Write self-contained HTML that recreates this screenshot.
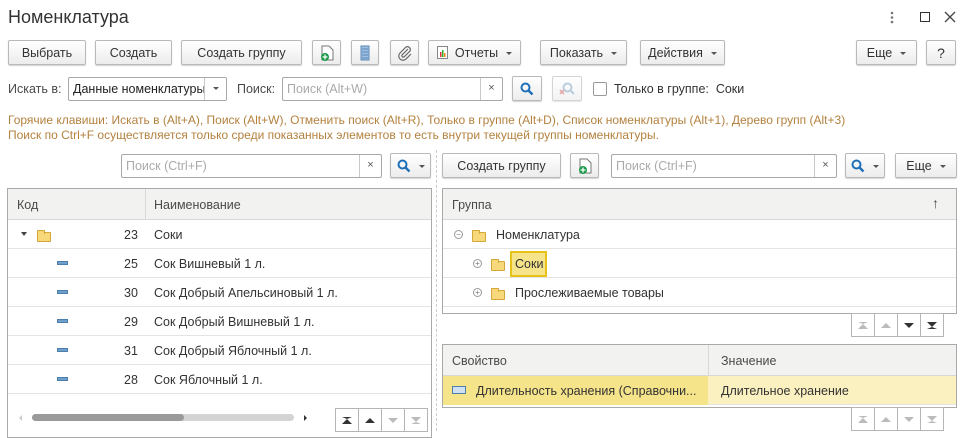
<!DOCTYPE html>
<html><head><meta charset="utf-8"><style>
*{box-sizing:border-box;margin:0;padding:0}
body{width:963px;height:431px;overflow:hidden;background:#fff;font-family:"Liberation Sans",Arial,sans-serif;font-size:12px;color:#333;position:relative}
.a{position:absolute}
.btn{position:absolute;height:25px;border:1px solid #b9b9b9;border-radius:2px;background:linear-gradient(#fff,#ececec);box-shadow:0 1px 1px rgba(0,0,0,.18);display:flex;align-items:center;justify-content:center;color:#333;font-size:12.5px;white-space:nowrap}
.dd::after{content:"";border-left:3px solid transparent;border-right:3px solid transparent;border-top:3px solid #555;margin-left:8px;margin-top:1px}
.inp{position:absolute;height:24px;border:1px solid #a8a8a8;border-radius:2px;background:#fff;color:#aaa;font-size:12.5px;padding:4px 0 0 4px}
.inp .x{position:absolute;right:0;top:0;width:22px;height:22px;border-left:1px solid #c8c8c8;color:#555;font-size:11px;text-align:center;line-height:21px}
.tbl{position:absolute;border:1px solid #a9a9a9;background:#fff;overflow:hidden}
.hd{position:absolute;left:0;right:0;top:0;height:31px;background:#f2f2f0;border-bottom:1px solid #d8d8d8;color:#4a4a4a;font-size:12.5px}
.row{position:absolute;left:0;right:0;height:29px;border-bottom:1px solid #e4e4e4;font-size:12.5px;color:#333}
.row span{position:absolute;top:8px}
.fold{position:absolute;width:14px;height:10px;background:#f7d87a;border:1px solid #d4a838;border-radius:1px}
.fold::before{content:"";position:absolute;left:-1px;top:-3px;width:6px;height:3px;background:#f7d87a;border:1px solid #d4a838;border-bottom:none;border-radius:1px 1px 0 0}
.item{position:absolute;width:11px;height:4px;background:#6fa0cc;border:1px solid #4d7fac}
.pm{position:absolute;width:9px;height:9px;border:1px solid #999;border-radius:50%;font-size:8px;line-height:7px;text-align:center;color:#777}
.nav{position:absolute;height:24px;display:flex}
.nav div{width:24px;height:24px;border:1px solid #b5b5b5;margin-left:-1px;background:#fff;display:flex;align-items:center;justify-content:center}
.up{border-left:5px solid transparent;border-right:5px solid transparent;border-bottom:5px solid #333}
.dn{border-left:5px solid transparent;border-right:5px solid transparent;border-top:5px solid #333}
.dis .up{border-bottom-color:#bbb}.dis .dn{border-top-color:#bbb}
.hint{position:absolute;left:8px;color:#b4813f;font-size:12px}
</style></head><body>
<div class="a" style="left:8px;top:7px;font-size:18px;color:#333">Номенклатура</div>
<svg class="a" style="left:888px;top:10px" width="8" height="16"><circle cx="4" cy="3" r="1.3" fill="#777"/><circle cx="4" cy="7.5" r="1.3" fill="#777"/><circle cx="4" cy="12" r="1.3" fill="#777"/></svg>
<div class="a" style="left:920px;top:12px;width:10px;height:10px;border:1.5px solid #333"></div>
<svg class="a" style="left:944px;top:11px" width="12" height="12"><path d="M1 1l10 10M11 1L1 11" stroke="#444" stroke-width="1.3"/></svg>

<div class="btn" style="left:8px;top:40px;width:78px">Выбрать</div>
<div class="btn" style="left:95px;top:40px;width:77px">Создать</div>
<div class="btn" style="left:181px;top:40px;width:121px">Создать группу</div>
<div class="btn" style="left:312px;top:40px;width:29px"><svg width="14" height="16"><path d="M2 1h7l4 4v10H2z" fill="#fff" stroke="#777"/><circle cx="5" cy="12" r="4" fill="#1a9a4a"/><path d="M5 9.5v5M2.5 12h5" stroke="#fff" stroke-width="1.3"/></svg></div>
<div class="btn" style="left:351px;top:40px;width:28px"><svg width="10" height="16"><rect x="1" y="1" width="8" height="14" fill="#9cc0e4" stroke="#5b86b5"/><path d="M2 4h6M2 7h6M2 10h6M2 13h6" stroke="#5b86b5"/></svg></div>
<div class="btn" style="left:390px;top:40px;width:29px"><svg width="16" height="16"><path d="M11 4L5 10a1.5 1.5 0 0 0 2 2l6-6a3 3 0 0 0-4-4L3 8a4 4 0 0 0 6 6l5-5" fill="none" stroke="#666" stroke-width="1.2"/></svg></div>
<div class="btn dd" style="left:428px;top:40px;width:93px"><svg width="12" height="13" style="margin-right:6px"><rect x=".5" y=".5" width="10" height="12" fill="#fff" stroke="#888"/><rect x="3" y="6" width="1.5" height="5" fill="#d33"/><rect x="5" y="4" width="1.5" height="7" fill="#3a3"/><rect x="7" y="7" width="1.5" height="4" fill="#e80"/></svg>Отчеты</div>
<div class="btn dd" style="left:540px;top:40px;width:87px">Показать</div>
<div class="btn dd" style="left:640px;top:40px;width:85px">Действия</div>
<div class="btn dd" style="left:856px;top:40px;width:61px">Еще</div>
<div class="btn" style="left:926px;top:40px;width:30px;font-size:14px">?</div>

<div class="a" style="left:8px;top:82px;color:#4a4a4a;font-size:12.5px">Искать в:</div>
<div class="inp" style="left:68px;top:77px;width:159px;color:#222;overflow:hidden;white-space:nowrap">Данные номенклатуры<div class="x" style="width:22px;background:#fff"><span style="display:inline-block;border-left:3px solid transparent;border-right:3px solid transparent;border-top:3px solid #555;vertical-align:middle"></span></div></div>
<div class="a" style="left:237px;top:82px;color:#4a4a4a;font-size:12.5px">Поиск:</div>
<div class="inp" style="left:282px;top:77px;width:221px">Поиск (Alt+W)<div class="x">×</div></div>
<div class="btn" style="left:512px;top:76px;width:30px"><svg width="14" height="14"><circle cx="5.5" cy="5.5" r="4" fill="none" stroke="#1e6fb8" stroke-width="2"/><path d="M8.5 8.5l4 4" stroke="#1e6fb8" stroke-width="2.4"/></svg></div>
<div class="btn" style="left:552px;top:76px;width:30px;opacity:.6"><svg width="16" height="14"><circle cx="8.5" cy="5.5" r="4" fill="none" stroke="#8aaccc" stroke-width="2"/><path d="M11.5 8.5l3.5 3.5" stroke="#8aaccc" stroke-width="2"/><path d="M1 8l4 4M5 8l-4 4" stroke="#c66" stroke-width="1.5"/></svg></div>
<div class="a" style="left:593px;top:82px;width:14px;height:14px;border:1px solid #999;border-radius:2px;background:#fff"></div>
<div class="a" style="left:614px;top:82px;color:#333;font-size:12.5px">Только в группе:&nbsp; Соки</div>

<div class="hint" style="top:113px">Горячие клавиши: Искать в (Alt+A), Поиск (Alt+W), Отменить поиск (Alt+R), Только в группе (Alt+D), Список номенклатуры (Alt+1), Дерево групп (Alt+3)</div>
<div class="hint" style="top:128px">Поиск по Ctrl+F осуществляется только среди показанных элементов то есть внутри текущей группы номенклатуры.</div>

<!-- left -->
<div class="inp" style="left:121px;top:154px;width:261px">Поиск (Ctrl+F)<div class="x">×</div></div>
<div class="btn dd" style="left:390px;top:153px;width:41px"><svg width="14" height="14"><circle cx="5.5" cy="5.5" r="4" fill="none" stroke="#1e6fb8" stroke-width="2"/><path d="M8.5 8.5l4 4" stroke="#1e6fb8" stroke-width="2.4"/></svg></div>
<div class="a" style="left:436px;top:150px;height:281px;border-left:1px dashed #ccc"></div>

<div class="tbl" style="left:7px;top:188px;width:425px;height:250px">
 <div class="hd"><span class="a" style="left:9px;top:9px">Код</span><div class="a" style="left:137px;top:0;height:31px;border-left:1px solid #d8d8d8"></div><span class="a" style="left:146px;top:9px">Наименование</span></div>
 <div class="row" style="top:31px"><span style="left:13px;top:12px;border-left:3px solid transparent;border-right:3px solid transparent;border-top:4px solid #444;width:0;height:0"></span><div class="fold" style="left:29px;top:12px"></div><span style="left:116px">23</span><span style="left:146px">Соки</span></div>
 <div class="row" style="top:60px"><div class="item" style="left:49px;top:12px"></div><span style="left:116px">25</span><span style="left:146px">Сок Вишневый 1 л.</span></div>
 <div class="row" style="top:89px"><div class="item" style="left:49px;top:12px"></div><span style="left:116px">30</span><span style="left:146px">Сок Добрый Апельсиновый 1 л.</span></div>
 <div class="row" style="top:118px"><div class="item" style="left:49px;top:12px"></div><span style="left:116px">29</span><span style="left:146px">Сок Добрый Вишневый 1 л.</span></div>
 <div class="row" style="top:147px"><div class="item" style="left:49px;top:12px"></div><span style="left:116px">31</span><span style="left:146px">Сок Добрый Яблочный 1 л.</span></div>
 <div class="row" style="top:176px"><div class="item" style="left:49px;top:12px"></div><span style="left:116px">28</span><span style="left:146px">Сок Яблочный 1 л.</span></div>
 <div class="a" style="left:24px;top:225px;width:262px;height:7px;border-radius:4px;background:#d4d4d4"></div>
 <div class="a" style="left:24px;top:225px;width:152px;height:7px;border-radius:4px;background:#9a9a9a"></div>
 <div class="a" style="left:11px;top:226px;border-top:3px solid transparent;border-bottom:3px solid transparent;border-right:3px solid #ccc"></div>
 <div class="a" style="left:296px;top:226px;border-top:3px solid transparent;border-bottom:3px solid transparent;border-left:3px solid #333"></div>
</div>
<div class="nav" style="left:336px;top:408px"><div><span class="up" style="border-top:2px solid #333;height:7px"></span></div><div><span class="up"></span></div><div class="dis"><span class="dn"></span></div><div class="dis"><span class="dn" style="border-bottom:2px solid #bbb;height:7px"></span></div></div>

<!-- right -->
<div class="btn" style="left:442px;top:153px;width:119px">Создать группу</div>
<div class="btn" style="left:570px;top:153px;width:29px"><svg width="14" height="16"><path d="M2 1h7l4 4v10H2z" fill="#fff" stroke="#777"/><circle cx="5" cy="12" r="4" fill="#1a9a4a"/><path d="M5 9.5v5M2.5 12h5" stroke="#fff" stroke-width="1.3"/></svg></div>
<div class="inp" style="left:611px;top:154px;width:226px">Поиск (Ctrl+F)<div class="x">×</div></div>
<div class="btn dd" style="left:845px;top:153px;width:40px"><svg width="14" height="14"><circle cx="5.5" cy="5.5" r="4" fill="none" stroke="#1e6fb8" stroke-width="2"/><path d="M8.5 8.5l4 4" stroke="#1e6fb8" stroke-width="2.4"/></svg></div>
<div class="btn dd" style="left:895px;top:153px;width:62px">Еще</div>

<div class="tbl" style="left:442px;top:188px;width:515px;height:126px">
 <div class="hd"><span class="a" style="left:9px;top:9px">Группа</span><span class="a" style="left:489px;top:6px;font-size:14px">↑</span></div>
 <div class="row" style="top:31px"><div class="pm" style="left:11px;top:10px">−</div><div class="fold" style="left:29px;top:12px"></div><span style="left:53px">Номенклатура</span></div>
 <div class="row" style="top:60px"><div class="pm" style="left:30px;top:10px">+</div><div class="fold" style="left:48px;top:12px"></div><div class="a" style="left:67px;top:2px;width:37px;height:26px;background:#f6e48a;border:2px solid #e6c21a"></div><span style="left:72px">Соки</span></div>
 <div class="row" style="top:89px"><div class="pm" style="left:30px;top:10px">+</div><div class="fold" style="left:48px;top:12px"></div><span style="left:72px">Прослеживаемые товары</span></div>
</div>
<div class="nav" style="left:852px;top:313px"><div class="dis"><span class="up" style="border-top:2px solid #bbb;height:7px"></span></div><div class="dis"><span class="up"></span></div><div><span class="dn"></span></div><div><span class="dn" style="border-bottom:2px solid #333;height:7px"></span></div></div>

<div class="tbl" style="left:442px;top:344px;width:515px;height:64px">
 <div class="hd"><span class="a" style="left:9px;top:9px">Свойство</span><div class="a" style="left:265px;top:0;height:31px;border-left:1px solid #d8d8d8"></div><span class="a" style="left:278px;top:9px">Значение</span></div>
 <div class="row" style="top:31px;background:#faf0c0"><div class="a" style="left:0;top:0;width:265px;height:29px;background:#f6e48a"></div><div class="a" style="left:9px;top:10px;width:14px;height:8px;border:1px solid #4d7fac;background:#cfe0f2"></div><span style="left:33px">Длительность хранения (Справочни...</span><span style="left:278px">Длительное хранение</span></div>
</div>
<div class="nav" style="left:852px;top:407px"><div class="dis"><span class="up" style="border-top:2px solid #bbb;height:7px"></span></div><div class="dis"><span class="up"></span></div><div class="dis"><span class="dn"></span></div><div class="dis"><span class="dn" style="border-bottom:2px solid #bbb;height:7px"></span></div></div>
</body></html>
